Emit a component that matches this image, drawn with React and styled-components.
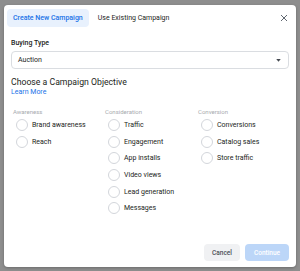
import React, { useState } from "react";
import styled, { createGlobalStyle } from "styled-components";

const GlobalStyle = createGlobalStyle`
  html, body {
    margin: 0;
    padding: 0;
    background: #8e8e8e;
    font-family: Roboto, "Liberation Sans", Arial, sans-serif;
  }
`;

const Backdrop = styled.div`
  width: 300px;
  height: 271px;
  padding: 5px 4px 4px 4px;
  box-sizing: border-box;
`;

const Modal = styled.div`
  width: 292px;
  height: 262px;
  background: #fff;
  border-radius: 4px;
  box-shadow: 0 1px 3px rgba(0, 0, 0, 0.25);
  display: flex;
  flex-direction: column;
  box-sizing: border-box;
  padding: 4px 7px 6px 3px;
`;

const Header = styled.div`
  display: flex;
  align-items: center;
  gap: 3px;
  height: 18px;
`;

const Tab = styled.button`
  border: none;
  height: 18px;
  padding: 0 6px;
  border-radius: 4px;
  font-family: inherit;
  font-size: 7px;
  font-weight: ${(p) => (p.$active ? 500 : 400)};
  color: ${(p) => (p.$active ? "#1a73e8" : "#1c1e21")};
  background: ${(p) => (p.$active ? "#e8f1fd" : "transparent")};
  cursor: pointer;
`;

const Close = styled.button`
  margin-left: auto;
  border: none;
  background: none;
  padding: 0;
  width: 12px;
  height: 12px;
  display: flex;
  align-items: center;
  justify-content: center;
  margin-right: -1px;
`;

const Body = styled.div`
  padding: 0 0 0 4px;
  flex: 1;
`;

const FieldLabel = styled.div`
  font-size: 7px;
  font-weight: 500;
  color: #1c1e21;
  margin-top: 12px;
`;

const Select = styled.div`
  margin-top: 4px;
  height: 16px;
  border: 1px solid #dadde1;
  border-radius: 4px;
  display: flex;
  align-items: center;
  justify-content: space-between;
  padding: 0 7px 0 6px;
  font-size: 7px;
  color: #1c1e21;
`;

const Title = styled.div`
  margin-top: 8px;
  font-size: 8.7px;
  color: #1c1e21;
`;

const LearnMore = styled.a`
  display: block;
  font-size: 7px;
  color: #1a73e8;
  margin-top: 1px;
  text-decoration: none;
`;

const Columns = styled.div`
  display: grid;
  grid-template-columns: 92px 93px 1fr;
  margin-top: 12px;
  padding-left: 2px;
`;

const Column = styled.div`
  display: flex;
  flex-direction: column;
`;

const GroupLabel = styled.div`
  font-size: 6px;
  color: #a8abaf;
  margin-bottom: 2px;
`;

const Option = styled.label`
  display: flex;
  align-items: center;
  gap: 4px;
  height: 16.6px;
  font-size: 7px;
  color: #1c1e21;
  padding-left: 3px;
  cursor: pointer;
`;

const Radio = styled.span`
  width: 12px;
  height: 12px;
  border-radius: 50%;
  border: 1px solid #d3d6db;
  box-sizing: border-box;
  background: #fff;
`;

const Footer = styled.div`
  display: flex;
  justify-content: flex-end;
  gap: 5px;
`;

const Button = styled.button`
  height: 17px;
  width: ${(p) => (p.$primary ? 44 : 36)}px;
  border: none;
  border-radius: 4px;
  padding: 0;
  font-family: inherit;
  font-size: 6.5px;
  font-weight: 500;
  color: ${(p) => (p.$primary ? "#fff" : "#4b4f56")};
  background: ${(p) => (p.$primary ? "#bcd6f8" : "#f0f1f3")};
`;

const groups = [
  { name: "Awareness", items: ["Brand awareness", "Reach"] },
  {
    name: "Consideration",
    items: ["Traffic", "Engagement", "App installs", "Video views", "Lead generation", "Messages"],
  },
  { name: "Conversion", items: ["Conversions", "Catalog sales", "Store traffic"] },
];

export default function App() {
  const [tab, setTab] = useState("new");

  return (
    <>
      <GlobalStyle />
      <Backdrop>
        <Modal>
          <Header>
            <Tab $active={tab === "new"} onClick={() => setTab("new")}>
              Create New Campaign
            </Tab>
            <Tab $active={tab === "existing"} onClick={() => setTab("existing")}>
              Use Existing Campaign
            </Tab>
            <Close>
              <svg width="8" height="8" viewBox="0 0 8 8">
                <path d="M1 1L7 7M7 1L1 7" stroke="#606770" strokeWidth="1" />
              </svg>
            </Close>
          </Header>
          <Body>
            <FieldLabel>Buying Type</FieldLabel>
            <Select>
              Auction
              <svg width="5" height="3" viewBox="0 0 6 4">
                <path d="M0 0H6L3 3.5Z" fill="#444950" />
              </svg>
            </Select>
            <Title>Choose a Campaign Objective</Title>
            <LearnMore href="#">Learn More</LearnMore>
            <Columns>
              {groups.map((g) => (
                <Column key={g.name}>
                  <GroupLabel>{g.name}</GroupLabel>
                  {g.items.map((it) => (
                    <Option key={it}>
                      <Radio />
                      {it}
                    </Option>
                  ))}
                </Column>
              ))}
            </Columns>
          </Body>
          <Footer>
            <Button>Cancel</Button>
            <Button $primary>Continue</Button>
          </Footer>
        </Modal>
      </Backdrop>
    </>
  );
}
